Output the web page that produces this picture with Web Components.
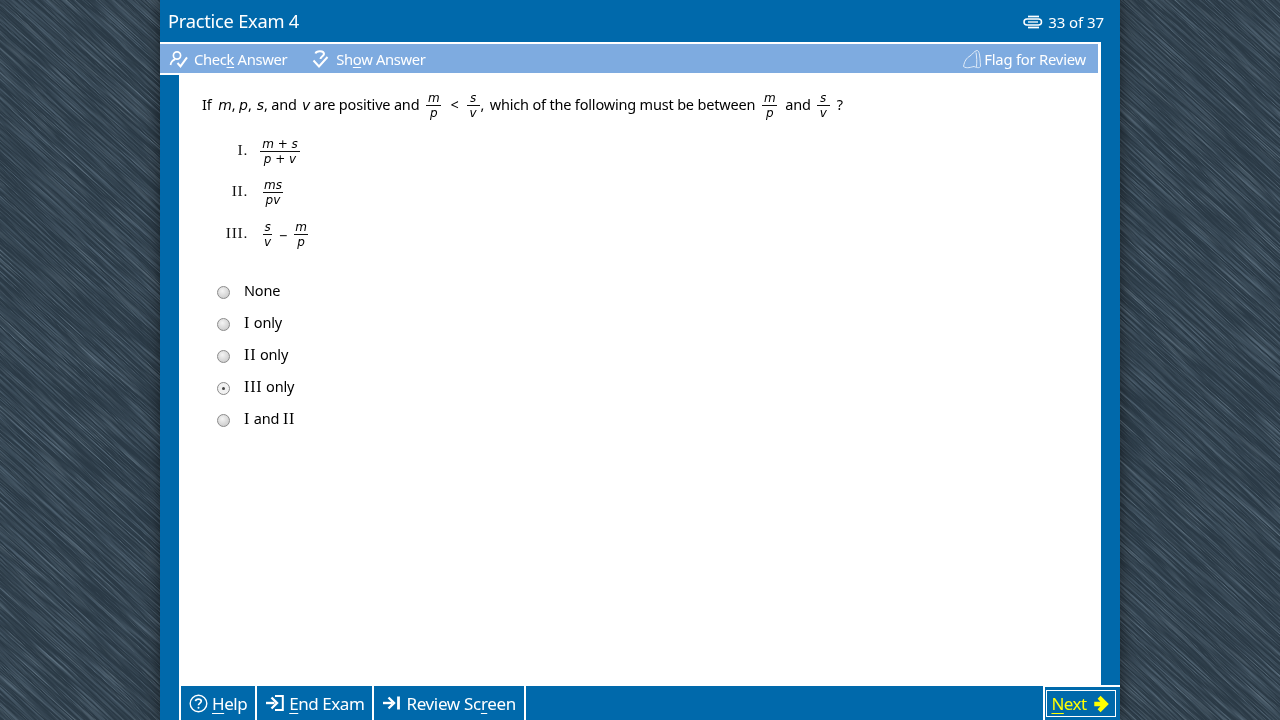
<!DOCTYPE html>
<html><head><meta charset="utf-8">
<style>
html,body{margin:0;height:100%;overflow:hidden}
body{width:1280px;height:720px;font-family:"Noto Sans","DejaVu Sans",sans-serif;background-color:#2b3a46;display:flex;justify-content:center}
</style></head><body>
<x-texture></x-texture>
<exam-app></exam-app>
<script>
const F='"Noto Sans","DejaVu Sans",sans-serif';
function def(name,css,html){customElements.define(name,class extends HTMLElement{constructor(){super();const s=this.attachShadow({mode:'open'});s.innerHTML='<style>'+css+'</style>'+(typeof html==='function'?html(this):html);}})}
const ICON={
check:'<svg width="20" height="20" viewBox="0 0 20 20" fill="none" stroke="#fff" stroke-width="1.7"><circle cx="8" cy="6.5" r="3.6"/><path d="M1.5 16c.6-3.4 2.4-5 4.6-5.6"/><path d="M8.5 14l3 3.4L18 8.4" stroke-width="2"/></svg>',
show:'<svg width="20" height="20" viewBox="0 0 20 20" fill="none" stroke="#fff" stroke-width="2"><path d="M4.500 4.500C5.500 1.500 13 1.500 13 5 13 7 9.500 7.500 9.500 10"/><path d="M2.500 11.500L8 17.500 16.500 8"/></svg>',
flag:'<svg width="22" height="22" viewBox="0 0 22 22" fill="none" stroke="#e2edf9" stroke-width="1"><path d="M1.500 18.500C2.500 13 4.500 10 8 8 10.500 6.500 12 3 15 2.500 17 2.500 18 6 18.500 18.500 17 20.500 14.500 19.500 12 18.500 9 19 5 21 1.500 18.500Z"/><path d="M14 4.500C14.800 9 15 14 14.500 18.800"/></svg>',
clip:'<svg width="20" height="16" viewBox="0 0 20 16" fill="none" stroke="#fff"><path d="M5 2.500H16" stroke-width="1.700"/><path d="M5 13.500H16" stroke-width="1.700"/><rect x="1" y="5" width="17.500" height="6" rx="3" stroke-width="1.500"/><path d="M5 8H15" stroke-width="1.300"/></svg>',
help:'<svg width="19" height="19" viewBox="0 0 19 19" fill="none" stroke="#fff"><circle cx="9.500" cy="9.500" r="8.300" stroke-width="1.400"/><path d="M6.500 7.200C7 4.500 12 4.500 12.300 7.200 12.500 9 9.500 9.300 9.500 11.300" stroke-width="1.700"/><circle cx="9.500" cy="13.800" r="1" fill="#fff" stroke="none"/></svg>',
end:'<svg width="20" height="18" viewBox="0 0 20 18" fill="none" stroke="#fff" stroke-width="2.400"><path d="M1 9H9.500"/><path d="M6.500 3.500L12 9 6.500 14.500"/><path d="M10 2H17.800V16H10" stroke-width="2"/></svg>',
review:'<svg width="19" height="18" viewBox="0 0 19 18" fill="none" stroke="#fff" stroke-width="2.400"><path d="M1 9H10"/><path d="M6.500 3.500L12 9 6.500 14.500"/><path d="M16.500 2.500V15.500" stroke-width="2.800"/></svg>',
next:'<svg width="15" height="18" viewBox="0 0 16 18"><path d="M7 .3L15.800 9 7 17.700 3.800 14.500 6.800 11.500H.3V6.500H6.800L3.800 3.500Z" fill="#ffff00"/></svg>'
};
def('x-texture',`:host{position:fixed;left:0;top:0;width:1280px;height:720px;display:block;overflow:hidden}svg{display:block}`,
`<svg width="1280" height="720" viewBox="0 0 1280 720"><defs>
<filter id="d" x="0" y="0" width="100%" height="100%"><feTurbulence type="fractalNoise" baseFrequency="0.014 1.100" numOctaves="2" seed="7"/><feColorMatrix values="0 0 0 0 .07  0 0 0 0 .11  0 0 0 0 .15  3.400 0 0 0 -1.500"/></filter>
<filter id="l" x="0" y="0" width="100%" height="100%"><feTurbulence type="fractalNoise" baseFrequency="0.016 1.100" numOctaves="2" seed="23"/><feColorMatrix values="0 0 0 0 .29  0 0 0 0 .38  0 0 0 0 .45  1 0 0 0 -.52"/></filter>
</defs><g transform="rotate(42 640 360)"><rect x="-200" y="-500" width="1700" height="1700" filter="url(#d)"/><rect x="-200" y="-500" width="1700" height="1700" filter="url(#l)"/></g></svg>`);
def('x-icon',':host{display:inline-flex;align-items:center;line-height:0}',h=>ICON[h.getAttribute('name')]);
def('x-frac',`:host{display:inline-flex;flex-direction:column;align-items:stretch;vertical-align:middle;font:italic 12px/12px "DejaVu Sans",sans-serif;color:#000;text-align:center;flex:none;letter-spacing:0}
.n{border-bottom:1px solid #111;padding:0 1px 1px;white-space:pre}.d{padding:1px 1px 0;white-space:pre}`,
h=>`<span class="n">${h.getAttribute('n')}</span><span class="d">${h.getAttribute('d')}</span>`);
def('x-tool',`:host{display:inline-flex;align-items:center;gap:5px;color:#fff;font:14.800px/30px ${F};letter-spacing:-.35px;white-space:nowrap}`,'<slot name="i"></slot><span><slot></slot></span>');
def('exam-header',`:host{display:flex;justify-content:space-between;align-items:center;height:42px;padding:0 16px 0 8px;color:#fff;flex:none}
.t{font-size:18.300px;letter-spacing:-.25px;position:relative;top:-1px}.c{display:flex;align-items:center;gap:5px;font-size:15px;letter-spacing:-.08px;padding-top:2px}`,
()=>`<span class="t">Practice Exam 4</span><span class="c"><x-icon name="clip"></x-icon>33 of 37</span>`);
def('exam-toolbar',`:host{display:flex;height:29px;flex:none;background:#7eabe0;border:solid #fff;border-width:2px 3px 2px 0;align-items:center;justify-content:space-between;padding:0 12px 0 9px;margin-right:19px}
.g{display:flex;gap:24px}u{text-underline-offset:2px;text-decoration-thickness:1px}`,
`<div class="g"><x-tool><x-icon slot="i" name="check"></x-icon>Chec<u>k</u> Answer</x-tool><x-tool><x-icon slot="i" name="show"></x-icon>Sh<u>o</u>w Answer</x-tool></div><x-tool style="gap:0;letter-spacing:-.22px"><x-icon slot="i" name="flag"></x-icon>Flag for Review</x-tool>`);
def('x-rn',':host{font-family:"Liberation Serif",serif;font-size:16px;letter-spacing:.8px;line-height:0}','<slot></slot>');
def('x-radio',`:host{display:flex;align-items:center;height:32px;padding-left:15px;font:14.500px/1 ${F};color:#000;letter-spacing:-.15px}
.r{box-sizing:border-box;width:13px;height:13px;border-radius:50%;border:1px solid #8b8b8b;background:radial-gradient(circle at 40% 35%,#f4f4f4,#cfcfcf 75%);margin:2px 14px 0 0;display:flex;align-items:center;justify-content:center;flex:none}
.r i{width:3px;height:3px;border-radius:50%;background:#444;display:none}:host([on]) .r{background:#f1f1f1}:host([on]) .r i{display:block}
span.l{position:relative;top:-1px}`,
`<span class="r"><i></i></span><span class="l"><slot></slot></span>`);
def('exam-question',`:host{display:block;flex:1;background:#fff;margin:0 19px;padding:17px 0 0 23px;color:#000;font:14.500px/24px ${F};letter-spacing:-.18px;min-height:0}
.q{height:24px;white-space:pre;display:flex;align-items:center}
i{font:italic 14px "DejaVu Sans",sans-serif;letter-spacing:0}
.mp{min-width:15px}.sv{min-width:13px}
.s{display:grid;grid-template-columns:46px auto;column-gap:12px;align-items:center;justify-content:start;margin-top:22px;row-gap:14px}
.s b{font:400 15.500px/1 "Liberation Serif",serif;text-align:right;letter-spacing:.7px;color:#111;position:relative;top:-2px}
.e{display:flex;align-items:center;margin-left:3px}.e span{margin:0 7px}
.a{margin-top:27px}.w3{margin-top:1px}`,
`<div class="q"><span>If <i style="margin-left:3px">m</i>, <i>p</i>, <i style="margin-left:1.500px">s</i>, and <i style="margin-left:1.500px">v</i> are positive and</span><x-frac class="mp" style="margin:3px 9px 0 7px" n="m" d="p"></x-frac><span>&lt;</span><x-frac class="sv" style="margin:3px 1px 0 8px" n="s" d="v"></x-frac><span>,</span><span style="margin-left:5.500px">which of the following must be between</span><x-frac class="mp" style="margin:3px 8px 0 7px" n="m" d="p"></x-frac><span>and</span><x-frac class="sv" style="margin:3px 7px 0 6px" n="s" d="v"></x-frac><span>?</span></div>
<div class="s"><b>I.</b><x-frac style="justify-self:start;width:40px" n="m + s" d="p + v"></x-frac><b>II.</b><x-frac style="justify-self:start;margin-left:3px" n="ms" d="pv"></x-frac><b class="w3">III.</b><div class="e w3"><x-frac n="s" d="v"></x-frac><span>−</span><x-frac n="m" d="p"></x-frac></div></div>
<div class="a"><x-radio>None</x-radio><x-radio><x-rn>I</x-rn> only</x-radio><x-radio><x-rn>II</x-rn> only</x-radio><x-radio on><x-rn>III</x-rn> only</x-radio><x-radio><x-rn>I</x-rn> and <x-rn>II</x-rn></x-radio></div>`);
def('x-btn',`:host{display:flex;align-items:center;gap:4px;padding:0 8px;border-right:2px solid #fff;color:#fff;font:17px/1 ${F};letter-spacing:-.45px;white-space:nowrap}
:host(:first-child){border-left:2px solid #fff}u{text-underline-offset:3px;text-decoration-thickness:1px}`,
'<slot name="i"></slot><span><slot></slot></span>');
def('exam-footer',`:host{display:flex;justify-content:space-between;height:34px;flex:none;padding-left:19px;position:relative}
.l{display:flex}.n{width:77px;margin-top:-1px;border-top:2px solid #fff;border-left:2px solid #fff;padding:3px 0 0 1px;box-sizing:border-box;height:35px;background:#0069ab}
.b{box-sizing:border-box;height:27px;width:70px;border:1px solid #fff;color:#ff0;font:17px/1 ${F};letter-spacing:-.55px;display:flex;align-items:center;justify-content:center;gap:7px;padding-right:2px}u{text-underline-offset:3px;text-decoration-thickness:1px}`,
`<div class="l"><x-btn><x-icon slot="i" name="help"></x-icon><u>H</u>elp</x-btn><x-btn><x-icon slot="i" name="end"></x-icon><u>E</u>nd Exam</x-btn><x-btn style="letter-spacing:-.32px;gap:5px"><x-icon slot="i" name="review"></x-icon>Review Sc<u>r</u>een</x-btn></div><div class="n"><div class="b"><span><u>N</u>ext</span><x-icon name="next"></x-icon></div></div>`);
def('exam-app',`:host{display:flex;flex-direction:column;width:960px;height:720px;background:#0069ab;box-shadow:0 0 14px rgba(0,0,0,.55);position:relative}`,
'<exam-header></exam-header><exam-toolbar></exam-toolbar><exam-question></exam-question><exam-footer></exam-footer>');
</script>
</body></html>
